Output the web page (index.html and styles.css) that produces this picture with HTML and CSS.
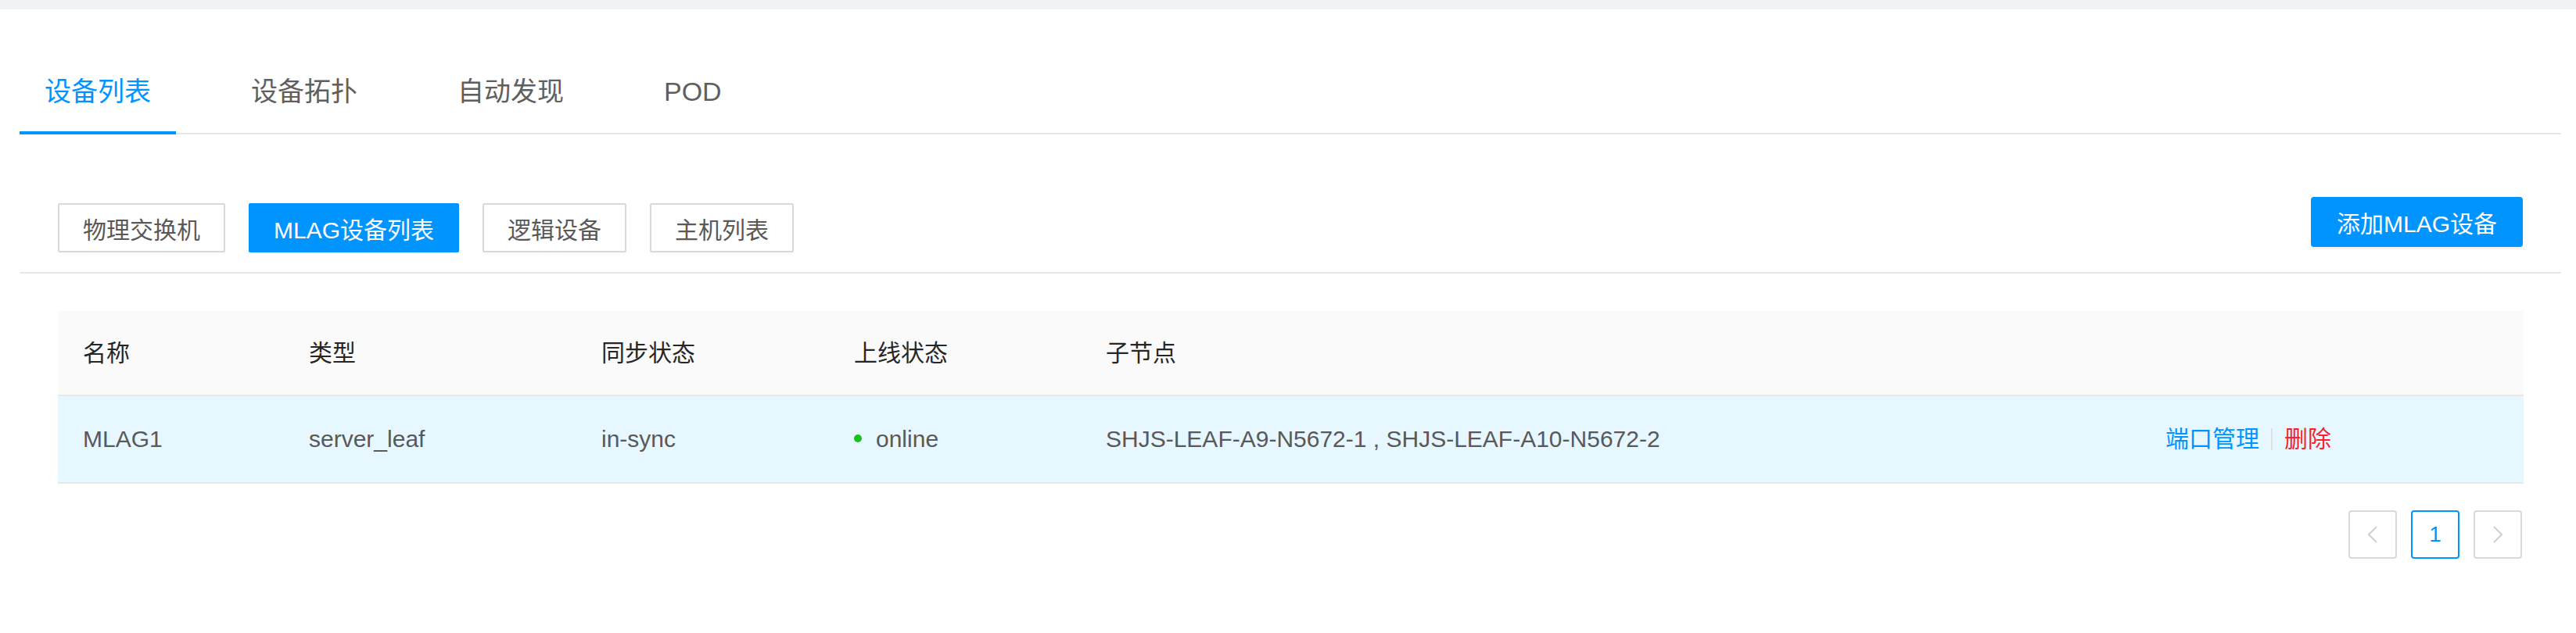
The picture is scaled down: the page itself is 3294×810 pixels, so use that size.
FILE: index.html
```html
<!DOCTYPE html>
<html lang="zh-CN">
<head>
<meta charset="utf-8">
<title>MLAG设备列表</title>
<link rel="stylesheet" href="styles.css">
</head>
<body>
<div class="topbar"></div>
<div class="page">
  <nav class="tabs">
    <div class="tab tab-active">设备列表</div>
    <div class="tab">设备拓扑</div>
    <div class="tab">自动发现</div>
    <div class="tab">POD</div>
  </nav>

  <div class="toolbar">
    <div class="filters">
      <button class="fbtn">物理交换机</button>
      <button class="fbtn fbtn-active">MLAG设备列表</button>
      <button class="fbtn">逻辑设备</button>
      <button class="fbtn">主机列表</button>
    </div>
    <button class="primary-btn">添加MLAG设备</button>
  </div>

  <div class="table-wrap">
    <table class="grid">
      <colgroup>
        <col class="c-name">
        <col class="c-type">
        <col class="c-sync">
        <col class="c-online">
        <col class="c-nodes">
        <col class="c-actions">
      </colgroup>
      <thead>
        <tr>
          <th>名称</th>
          <th>类型</th>
          <th>同步状态</th>
          <th>上线状态</th>
          <th>子节点</th>
          <th></th>
        </tr>
      </thead>
      <tbody>
        <tr class="row-hover">
          <td>MLAG1</td>
          <td>server_leaf</td>
          <td>in-sync</td>
          <td><span class="dot"></span>online</td>
          <td>SHJS-LEAF-A9-N5672-1 , SHJS-LEAF-A10-N5672-2</td>
          <td><a class="link">端口管理</a><span class="vdiv"></span><a class="link link-danger">删除</a></td>
        </tr>
      </tbody>
    </table>
  </div>

  <div class="pager">
    <span class="pg pg-disabled">
      <svg width="14" height="22" viewBox="0 0 14 22"><polyline points="12,1 2,11 12,21" fill="none" stroke="#cfcfcf" stroke-width="2"/></svg>
    </span>
    <span class="pg pg-active">1</span>
    <span class="pg pg-disabled">
      <svg width="14" height="22" viewBox="0 0 14 22"><polyline points="2,1 12,11 2,21" fill="none" stroke="#cfcfcf" stroke-width="2"/></svg>
    </span>
  </div>
</div>
</body>
</html>
```

FILE: styles.css
```css
* { box-sizing: border-box; }

html, body {
  margin: 0;
  padding: 0;
  background: #ffffff;
  font-family: "Liberation Sans", "Noto Sans CJK SC", sans-serif;
  color: #595959;
}

.topbar {
  height: 12px;
  background: #f0f2f5;
}

.page {
  padding: 0 19px 0 25px;
}

/* Tabs */
.tabs {
  margin-top: 58px;
  display: flex;
  border-bottom: 2px solid #e8e8e8;
}

.tab {
  position: relative;
  padding: 23px 32px 29px;
  margin-right: 64px;
  font-size: 34px;
  line-height: 48px;
  color: #5f5f5f;
}

.tab-active {
  color: #0094ff;
}

.tab-active::after {
  content: "";
  position: absolute;
  left: 0;
  right: 0;
  bottom: -2px;
  height: 4px;
  background: #0094ff;
}

/* Toolbar */
.toolbar {
  margin-top: 80px;
  padding: 0 49px 25px 49px;
  display: flex;
  justify-content: space-between;
  align-items: flex-start;
  border-bottom: 2px solid #e8e8e8;
}

.filters {
  display: flex;
  gap: 30px;
  margin-top: 8px;
}

.fbtn {
  height: 63px;
  padding: 0 30px;
  font-family: "Liberation Sans", "Noto Sans CJK SC", sans-serif;
  font-size: 30px;
  color: #595959;
  background: #ffffff;
  border: 2px solid #d9d9d9;
  border-radius: 2px;
  box-shadow: 0 2px 0 rgba(0, 0, 0, 0.02);
}

.fbtn-active {
  background: #0094ff;
  border-color: #0094ff;
  color: #ffffff;
}

.primary-btn {
  height: 64px;
  padding: 0 31px;
  font-family: "Liberation Sans", "Noto Sans CJK SC", sans-serif;
  font-size: 30px;
  color: #ffffff;
  background: #0094ff;
  border: 2px solid #0094ff;
  border-radius: 4px;
  box-shadow: 0 3px 0 rgba(0, 0, 0, 0.05);
}

/* Table */
.table-wrap {
  padding: 48px 48px 0 49px;
}

.grid {
  width: 100%;
  table-layout: fixed;
  border-collapse: collapse;
  font-size: 30px;
}

.c-name { width: 289px; }
.c-type { width: 374px; }
.c-sync { width: 323px; }
.c-online { width: 322px; }
.c-nodes { width: 1355px; }

.grid th {
  text-align: left;
  font-weight: normal;
  color: #262626;
  background: #fafafa;
  padding: 32px 32px;
  line-height: 43px;
  border-bottom: 2px solid #e8e8e8;
}

.grid td {
  padding: 33px 32px;
  line-height: 44px;
  color: #595959;
  border-bottom: 2px solid #e8e8e8;
  white-space: nowrap;
}

.row-hover td {
  background: #e6f7ff;
}

.dot {
  display: inline-block;
  width: 10px;
  height: 10px;
  border-radius: 50%;
  background: #19c21a;
  margin-right: 18px;
  vertical-align: middle;
  position: relative;
  top: -3px;
}

.link {
  color: #0094ff;
  cursor: pointer;
}

.link-danger {
  color: #f5222d;
}

.vdiv {
  display: inline-block;
  width: 2px;
  height: 28px;
  background: #e0e0e0;
  margin: 0 15px;
  vertical-align: middle;
  position: relative;
  top: -2px;
}

/* Pagination */
.pager {
  margin-top: 34px;
  padding-right: 50px;
  display: flex;
  justify-content: flex-end;
  gap: 18px;
}

.pg {
  width: 62px;
  height: 62px;
  border: 2px solid #d9d9d9;
  border-radius: 4px;
  display: flex;
  align-items: center;
  justify-content: center;
  font-size: 28px;
  color: #595959;
  background: #ffffff;
}

.pg-active {
  border-color: #0094ff;
  color: #0094ff;
}
```
